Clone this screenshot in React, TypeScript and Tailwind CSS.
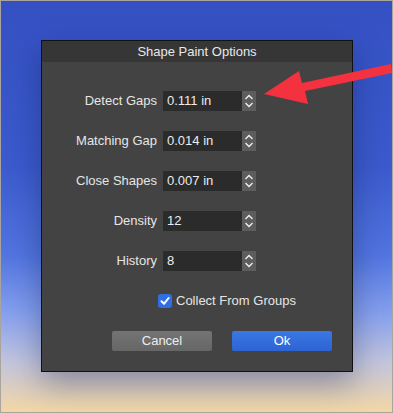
const rows = [
  { label: 'Detect Gaps', value: '0.111 in' },
  { label: 'Matching Gap', value: '0.014 in' },
  { label: 'Close Shapes', value: '0.007 in' },
  { label: 'Density', value: '12' },
  { label: 'History', value: '8' },
];

const Stepper = () => (
  <div className="flex h-[20px] w-[14px] items-center justify-center bg-[#5d5d5d]">
    <svg width="14" height="20" viewBox="0 0 14 20" fill="none">
      <polyline points="3.5,8 7,4.5 10.5,8" stroke="#f2f2f2" strokeWidth="1.3" />
      <polyline points="3.5,12 7,15.5 10.5,12" stroke="#f2f2f2" strokeWidth="1.3" />
    </svg>
  </div>
);

const Arrow = () => (
  <svg className="pointer-events-none absolute left-0 top-0" width="393" height="413" viewBox="0 0 393 413">
    <polygon
      points="263,93 298,70 301,82 390,63 391,72 304,90 307,103"
      fill="#f4323f"
    />
  </svg>
);

export default function App() {
  return (
    <div
      className="relative box-border h-[413px] w-[393px] overflow-hidden border border-[#a9a59e] bg-[linear-gradient(180deg,#3550c3_0%,#3b5acd_40%,#5275e0_62%,#86a0ee_76%,#c3c5dc_88%,#f3d7a5_100%)] pl-[40px] pt-[39px]"
      style={{ fontFamily: '"Liberation Sans", Arial, sans-serif' }}
    >
      <div className="flex h-[332px] w-[312px] flex-col border border-[#111] bg-[#434343] shadow-[0_12px_30px_rgba(10,20,60,0.35)]">
        <div className="flex h-[21px] items-center justify-center bg-[#363636] text-[13px] text-[#e8e8e8]">
          Shape Paint Options
        </div>

        <div className="flex flex-col gap-[20px] pt-[29px]">
          {rows.map((row) => (
            <div key={row.label} className="flex h-[20px] items-center">
              <div className="w-[115px] text-right text-[13px] text-[#e6e6e6]">{row.label}</div>
              <div className="ml-[6px] flex h-[20px] w-[79px] items-center bg-[#2b2b2b] pl-[4px] text-[13px] text-[#ececec]">
                {row.value}
              </div>
              <Stepper />
            </div>
          ))}
        </div>

        <div className="mt-[23px] flex h-[14px] items-center pl-[116px] leading-[14px]">
          <div className="flex h-[14px] w-[14px] items-center justify-center rounded-[3px] bg-[#2f6fe3]">
            <svg width="10" height="10" viewBox="0 0 10 10" fill="none">
              <polyline points="1.5,5.2 4,7.8 8.6,2" stroke="#fff" strokeWidth="2" strokeLinecap="round" strokeLinejoin="round" />
            </svg>
          </div>
          <span className="ml-[4px] text-[13px] text-[#e6e6e6]">Collect From Groups</span>
        </div>

        <div className="mt-[23px] flex justify-end gap-[20px] pr-[20px]">
          <button className="h-[20px] w-[100px] rounded-[2px] bg-[linear-gradient(180deg,#747474,#666)] text-[13px] leading-[20px] text-[#eeeeee]">
            Cancel
          </button>
          <button className="h-[20px] w-[100px] rounded-[2px] bg-[linear-gradient(180deg,#3b78e4,#2d63d3)] text-[13px] leading-[20px] text-white">
            Ok
          </button>
        </div>
      </div>
      <Arrow />
    </div>
  );
}
